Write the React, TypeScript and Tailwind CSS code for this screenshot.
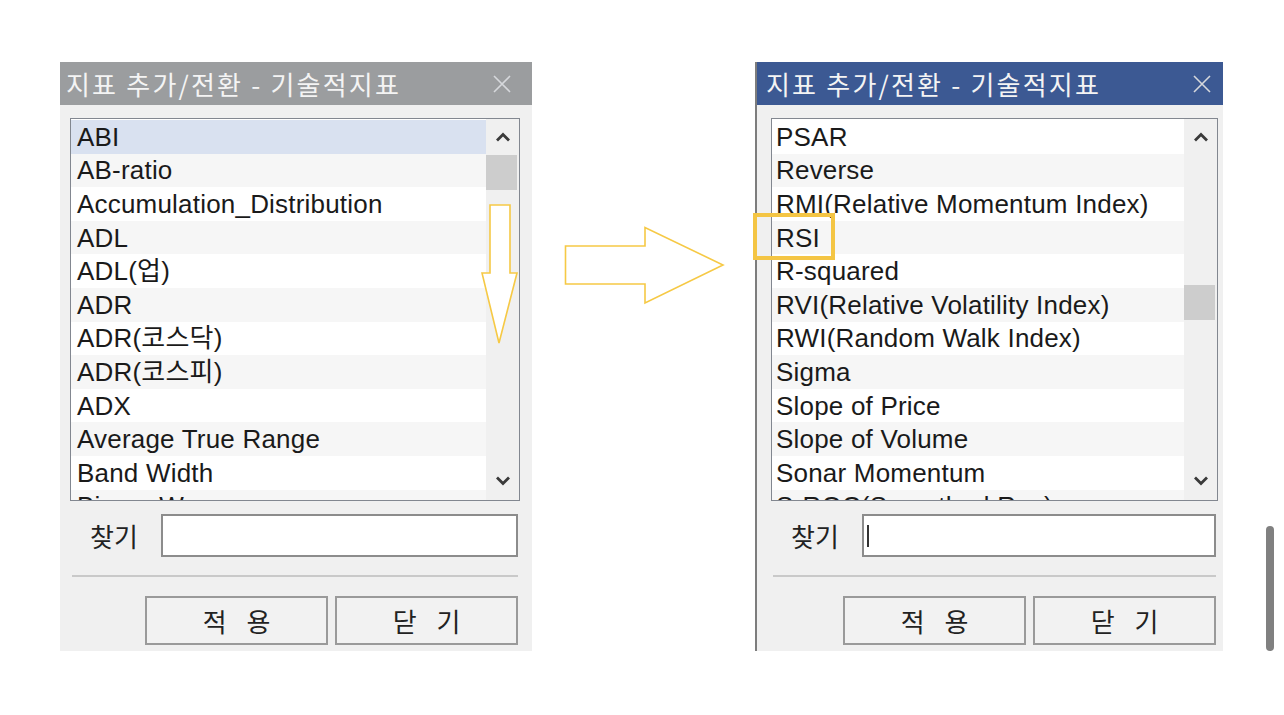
import React from 'react';

const leftItems = [
  'ABI',
  'AB-ratio',
  'Accumulation_Distribution',
  'ADL',
  'ADL(업)',
  'ADR',
  'ADR(코스닥)',
  'ADR(코스피)',
  'ADX',
  'Average True Range',
  'Band Width',
  'Binary Wave',
];

const rightItems = [
  'PSAR',
  'Reverse',
  'RMI(Relative Momentum Index)',
  'RSI',
  'R-squared',
  'RVI(Relative Volatility Index)',
  'RWI(Random Walk Index)',
  'Sigma',
  'Slope of Price',
  'Slope of Volume',
  'Sonar Momentum',
  'S-ROC(Smoothed Roc)',
];

const font = { fontFamily: '"Liberation Sans", "Noto Sans CJK KR", sans-serif' };
const krFont = { fontFamily: '"Noto Sans CJK KR", "Liberation Sans", sans-serif' };

function Chevron({ down }: { down?: boolean }) {
  return (
    <svg width="16" height="10" viewBox="0 0 16 10" className={down ? 'rotate-180' : ''}>
      <path d="M2 8.5 L8 2.5 L14 8.5" fill="none" stroke="#3a3a3a" strokeWidth="2.8" />
    </svg>
  );
}

function ListBox({
  items,
  selected,
  thumbTop,
  textPad,
}: {
  items: string[];
  selected?: number;
  thumbTop: number;
  textPad: string;
}) {
  return (
    <div className="flex h-[383px] border border-[#828790] bg-white overflow-hidden">
      <div className="flex-1 overflow-hidden pt-px">
        {items.map((item, i) => (
          <div
            key={item}
            className={`h-[33.6px] ${textPad} flex items-center text-[26px] tracking-[0.2px] leading-none text-[#1a1a1a] whitespace-nowrap ${
              i === selected ? 'bg-[#d9e1f0]' : i % 2 === 1 ? 'bg-[#f6f6f6]' : 'bg-white'
            }`}
          >
            {item}
          </div>
        ))}
      </div>
      <div className="w-[33px] bg-[#f0f0f0] flex flex-col items-center relative shrink-0">
        <div className="h-[36px] flex items-center justify-center">
          <Chevron />
        </div>
        <div className="absolute left-0 w-[31px] h-[35px] bg-[#cdcdcd]" style={{ top: thumbTop }} />
        <div className="flex-1" />
        <div className="h-[38px] flex items-center justify-center">
          <Chevron down />
        </div>
      </div>
    </div>
  );
}

function Dialog({
  barColor,
  items,
  selected,
  thumbTop,
  width,
  titlePad,
  listInset,
  textPad,
  caret,
  children,
}: {
  barColor: string;
  items: string[];
  selected?: number;
  thumbTop: number;
  width: string;
  titlePad: string;
  listInset: string;
  textPad: string;
  caret?: boolean;
  children?: React.ReactNode;
}) {
  return (
    <div className={`relative ${width} h-[589px] bg-[#f0f0f0] flex flex-col`} style={font}>
      <div className={`h-[43px] ${barColor} flex items-center justify-between ${titlePad}`}>
        <span className="text-[26px] tracking-[2.2px] text-[#f4f4f4] leading-none" style={krFont}>
          지표 추가/전환 - 기술적지표
        </span>
        <svg width="20" height="20" viewBox="0 0 20 20">
          <path d="M2 2 L18 18 M18 2 L2 18" stroke="#d6d8dc" strokeWidth="1.6" />
        </svg>
      </div>
      <div className={`flex flex-col pt-[13px] ${listInset}`}>
        <ListBox items={items} selected={selected} thumbTop={thumbTop} textPad={textPad} />
        <div className="flex items-center mt-[13px] mr-[2px]">
          <span className="w-[91px] pl-[20px] text-[26px] leading-none text-[#222]" style={krFont}>
            찾기
          </span>
          <div className="flex-1 h-[43px] bg-white border-2 border-[#8c8c8c] flex items-center pl-[3px]">
            {caret && <div className="w-[2px] h-[22px] bg-[#333]" />}
          </div>
        </div>
        <div className="mt-[18px] h-[2px] bg-[#c9c9c9] mx-[2px]" />
        <div className="flex justify-end gap-[7px] mt-[19px] mr-[2px]">
          {['적 용', '닫 기'].map((b) => (
            <button
              key={b}
              className="w-[183px] h-[49px] border-2 border-[#9a9a9a] bg-[#f2f2f2] text-[26px] text-[#222] tracking-[7px] pl-[7px]"
              style={krFont}
            >
              {b}
            </button>
          ))}
        </div>
      </div>
      {children}
    </div>
  );
}

export default function App() {
  return (
    <div className="relative w-[1284px] h-[715px] bg-white overflow-hidden">
      <div className="flex items-start pl-[60px] pt-[62px]">
        <Dialog
          barColor="bg-[#9b9d9f]"
          items={leftItems}
          selected={0}
          thumbTop={36}
          width="w-[472px]"
          titlePad="pl-[6px] pr-[20px]"
          listInset="pl-[10px] pr-[12px]"
          textPad="pl-[6px]"
        >
          {/* down arrow annotation */}
          <svg className="absolute left-[421px] top-[142px]" width="38" height="142" viewBox="0 0 38 142">
            <path
              d="M9 1 H29 V69 H36 L18 139 L1 69 H9 Z"
              fill="white"
              stroke="#f6c945"
              strokeWidth="1.6"
            />
          </svg>
        </Dialog>
        <div className="w-[223px] shrink-0 pt-[164px] pl-[32px]">
          <svg width="162" height="80" viewBox="0 0 162 80">
            <path
              d="M1.5 20 H81 V1.5 L159 39 L81 77 V58 H1.5 Z"
              fill="white"
              stroke="#f6c945"
              strokeWidth="1.6"
            />
          </svg>
        </div>
        <div className="border-l-2 border-[#7d7d7d] w-[468px]">
          <Dialog
            barColor="bg-[#3c5993]"
            items={rightItems}
            thumbTop={166}
            width="w-[466px]"
            titlePad="pl-[9px] pr-[11px]"
            listInset="pl-[14px] pr-[5px]"
            textPad="pl-[4px]"
            caret
          >
            <div className="absolute left-[-4px] top-[151px] w-[82px] h-[47px] border-[4px] border-[#f4c544]" />
          </Dialog>
        </div>
      </div>
      <div className="absolute left-[1266px] top-[526px] w-[8px] h-[125px] rounded-full bg-[#808080]" />
    </div>
  );
}
